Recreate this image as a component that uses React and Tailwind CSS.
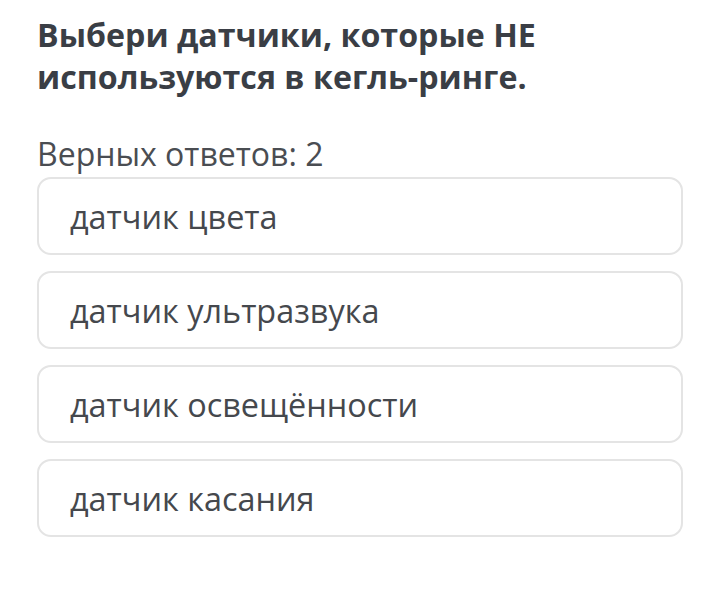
const OPTIONS = [
    "датчик цвета",
    "датчик ультразвука",
    "датчик освещённости",
    "датчик касания",
];

export default function App() {
    return (
        <div className="min-h-[594px] w-[713px] bg-white pl-[37px] pr-[30px] pt-[14px] font-['Open_Sans',sans-serif]">
            <h1 className="text-[32.2px] font-bold leading-[42px] text-[#3a3e45]">
                Выбери датчики, которые НЕ
                <br />
                используются в кегль-ринге.
            </h1>
            <p className="mt-[36px] text-[32px] leading-[40px] text-[#4a4d52]">
                Верных ответов: 2
            </p>
            <div className="mt-[3px] flex flex-col gap-4">
                {OPTIONS.map((opt) => (
                    <div
                        key={opt}
                        className="flex h-[78px] items-center rounded-[14px] border-2 border-[#e4e4e4] pl-[31px] text-[32.4px] text-[#45484d]"
                    >
                        {opt}
                    </div>
                ))}
            </div>
        </div>
    );
}
